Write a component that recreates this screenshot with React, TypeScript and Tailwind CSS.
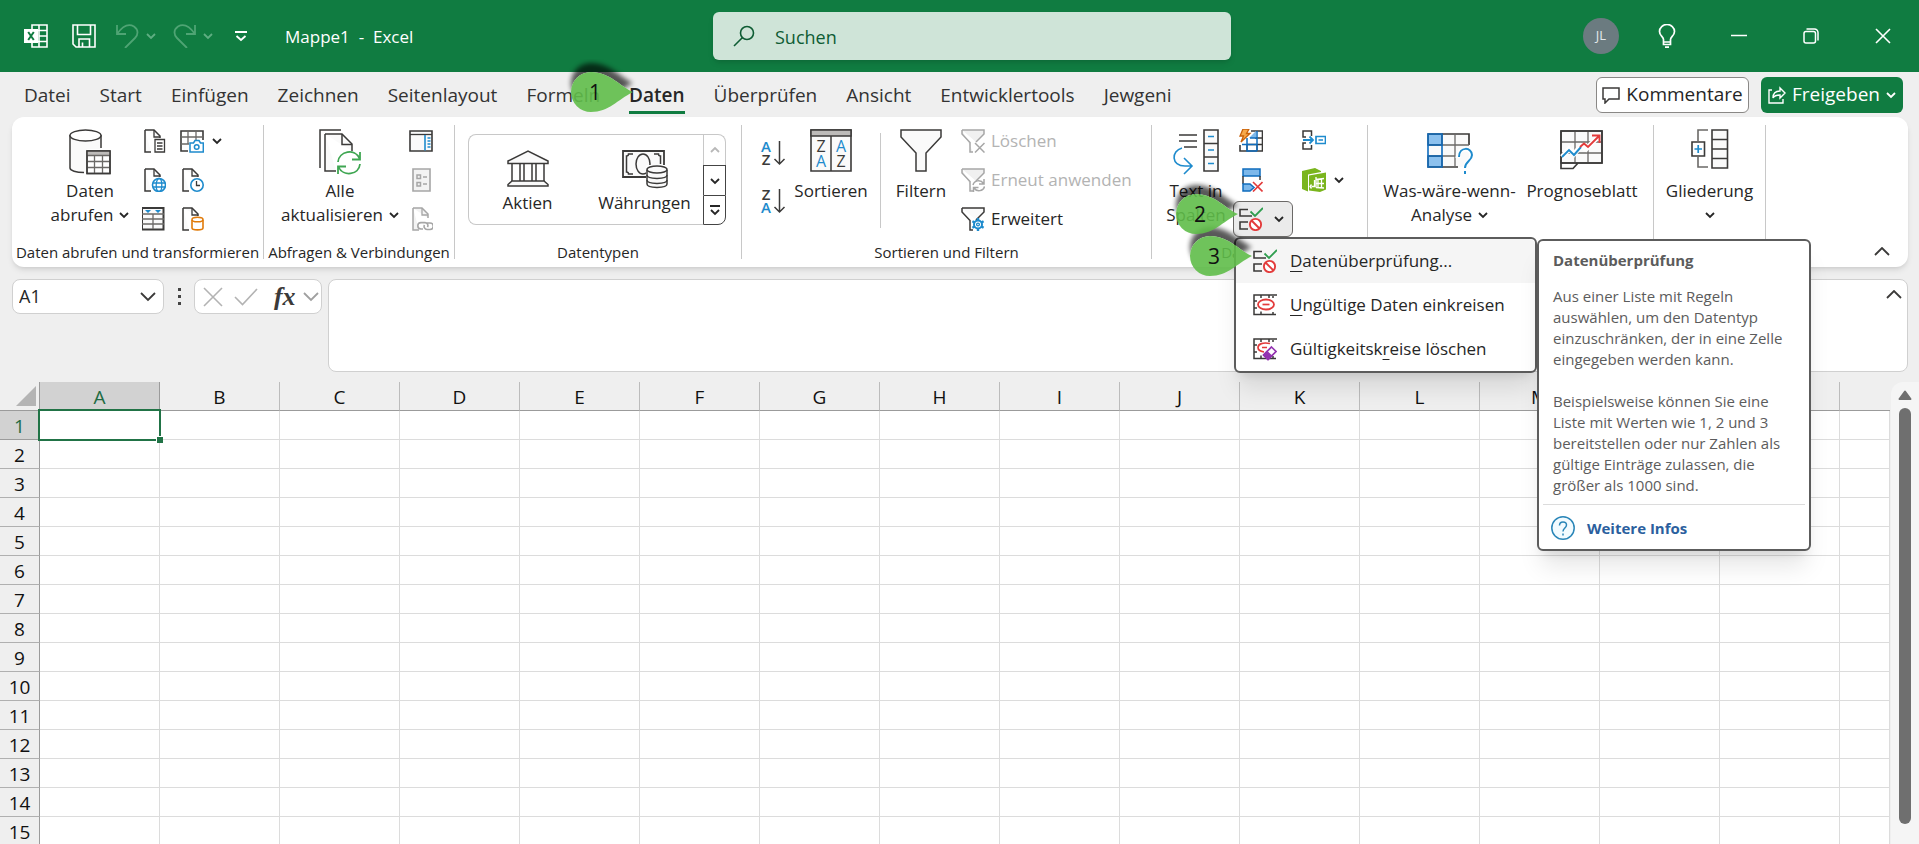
import { useState, type ReactNode } from "react";

const DARK = "#3b3a39";
const BLUE = "#1e8bcd";
const GREY = "#a6a6a6";

const TABS = [
  "Datei",
  "Start",
  "Einfügen",
  "Zeichnen",
  "Seitenlayout",
  "Formeln",
  "Daten",
  "Überprüfen",
  "Ansicht",
  "Entwicklertools",
  "Jewgeni",
];

const COLUMNS = "ABCDEFGHIJKLMNO".split("");
const ROWS = Array.from({ length: 15 }, (_, i) => i + 1);

type SvgProps = {
  w?: number;
  h?: number;
  stroke?: string;
  sw?: number;
  children: ReactNode;
};

function Svg({ w = 24, h = 24, stroke = DARK, sw = 1.3, children }: SvgProps) {
  return (
    <svg
      width={w}
      height={h}
      viewBox={`0 0 ${w} ${h}`}
      fill="none"
      stroke={stroke}
      strokeWidth={sw}
      className="shrink-0"
      aria-hidden="true"
    >
      {children}
    </svg>
  );
}

function Chevron({ color = "#262626", up = false }: { color?: string; up?: boolean }) {
  return (
    <Svg w={10} h={8} stroke={color} sw={1.8}>
      <path d={up ? "M1 6l4-4 4 4" : "M1 2l4 4 4-4"} />
    </Svg>
  );
}

function WideChevron({ color = "#3b3a39", up = false }: { color?: string; up?: boolean }) {
  return (
    <Svg w={16} h={10} stroke={color} sw={1.8}>
      <path d={up ? "M1 8l7-7 7 7" : "M1 1l7 7 7-7"} />
    </Svg>
  );
}

/* ---------- small ribbon icons ---------- */

function Page({ stroke = DARK }: { stroke?: string }) {
  return (
    <>
      <path d="M3 1h9l6 6v2M3 1v22h6" fill="#fafafa" stroke={stroke} strokeWidth="1.500" />
      <path d="M12 1v7h6" stroke={stroke} />
    </>
  );
}

function TextFileIcon() {
  return (
    <Svg>
      <Page />
      <path d="M13 10.500h9.500v12.500h-9.500z" fill="#fff" />
      <path d="M15 14h5.500M15 17h5.500M15 20h5.500" />
    </Svg>
  );
}

function WebFileIcon() {
  return (
    <Svg>
      <Page />
      <circle cx="17" cy="17" r="6.500" fill="#fff" stroke={BLUE} strokeWidth="1.600" />
      <ellipse cx="17" cy="17" rx="2.800" ry="6.500" stroke={BLUE} />
      <path d="M11 15h12M11 19h12" stroke={BLUE} />
    </Svg>
  );
}

function RangeIcon() {
  return (
    <Svg>
      <path d="M0 1h21.500v21.500H0z" fill="#fafafa" strokeWidth="2" />
      <path d="M0 7h22M0 12h22M0 17h22M11 7v15" stroke="#6b6967" />
      <path d="M3 3h6l-3 3zM13 3h6l-3 3z" fill={BLUE} stroke="none" />
    </Svg>
  );
}

function PictureTableIcon() {
  return (
    <Svg>
      <path d="M23 11V2H1v20h7" strokeWidth="1.600" />
      <path d="M1 8h22M1 15h8M8 2v13M16 2v9" stroke="#6b6967" />
      <path d="M10 14h3.500l1.500-2.500h4l1.500 2.500H23.300v9H10z" fill="#fff" stroke={BLUE} strokeWidth="1.500" />
      <circle cx="16.700" cy="18" r="2.300" stroke={BLUE} strokeWidth="1.500" />
    </Svg>
  );
}

function RecentIcon() {
  return (
    <Svg>
      <Page />
      <circle cx="17" cy="17" r="6.200" fill="#fff" stroke={BLUE} strokeWidth="1.600" />
      <path d="M16.500 13v4.500H20" />
    </Svg>
  );
}

function ConnectionIcon() {
  return (
    <Svg>
      <Page />
      <path d="M12 13v8c0 2.500 11 2.500 11 0v-8" fill="#fff" stroke="#e07b0a" strokeWidth="1.600" />
      <ellipse cx="17.500" cy="12.500" rx="5.500" ry="2.300" fill="#fff" stroke="#e07b0a" strokeWidth="1.600" />
    </Svg>
  );
}

function PaneIcon() {
  return (
    <Svg>
      <path d="M1 2h22v20H1z" fill="#fafafa" strokeWidth="1.600" />
      <path d="M1 5.500h22" />
      <path d="M16 6v15.500" stroke={BLUE} strokeWidth="1.600" />
      <path d="M18.500 9h3M18.500 12h3M18.500 15h3M18.500 18h3" stroke={BLUE} />
    </Svg>
  );
}

function PropertiesIcon() {
  return (
    <Svg stroke={GREY}>
      <path d="M4 1h17v22H4z" fill="#f3f3f3" strokeWidth="1.600" />
      <path d="M8 7h3.500v3.500H8zM8 14.500h3.500V18H8zM14 9h4M14 16h4" strokeWidth="1.500" />
    </Svg>
  );
}

function LinksIcon() {
  return (
    <Svg stroke={GREY}>
      <path d="M4 1h9l6 6v4M4 1v22h6" fill="#f3f3f3" strokeWidth="1.500" />
      <path d="M13 1v7h6" />
      <path
        d="M14 22h-2a3.200 3.200 0 010-6.400h4a3 3 0 012.500 4.500M18 16h3a3.200 3.200 0 010 6.500h-3a3 3 0 01-2.500-4.500"
        strokeWidth="1.600"
      />
    </Svg>
  );
}

function SortLetters({ desc = false }: { desc?: boolean }) {
  return (
    <svg width="26" height="30" viewBox="0 0 26 30" className="overflow-visible" aria-hidden="true">
      <g fontFamily="'Open Sans', sans-serif" fontSize="15" fontWeight="600" textAnchor="middle">
        <text x="6" y="12" fill={desc ? DARK : BLUE}>
          {desc ? "Z" : "A"}
        </text>
        <text x="6" y="25" fill={desc ? BLUE : DARK}>
          {desc ? "A" : "Z"}
        </text>
      </g>
      <path d="M19.500 1v23M14.500 19l5 5 5-5" fill="none" stroke={DARK} strokeWidth="1.500" />
    </svg>
  );
}

function SmallFunnel({ kind }: { kind: "clear" | "reapply" | "advanced" }) {
  const c = kind === "advanced" ? DARK : GREY;
  return (
    <Svg stroke={c}>
      <path d="M1 1h22v4l-8 8M1 1v4l8 8.500V23h3" fill={kind === "advanced" ? "#fafafa" : "#f0f0f0"} strokeWidth="1.500" />
      {kind === "clear" && <path d="M14 14l9.500 9.500M23.500 14L14 23.500" strokeWidth="1.500" />}
      {kind === "reapply" && (
        <path
          d="M12 17c1-4.500 7.500-6 10.500-1.500M23 11v5h-5M23.500 18.500c-1 4.500-7.500 6-10.500 1.500M12.500 24v-4.500h5"
          strokeWidth="1.500"
        />
      )}
      {kind === "advanced" && (
        <>
          <circle cx="17" cy="17.500" r="4" fill="#fff" stroke={BLUE} strokeWidth="2" />
          <circle cx="17" cy="17.500" r="1.400" stroke={BLUE} />
          <path
            d="M17 11v3M17 21v3M11.400 14.200l2.600 1.500M20 19.300l2.600 1.500M11.400 20.800l2.600-1.500M20 15.700l2.600-1.500"
            stroke={BLUE}
            strokeWidth="2.400"
          />
        </>
      )}
    </Svg>
  );
}

function FlashFillIcon() {
  return (
    <Svg>
      <path d="M12 2h11.500v20H1v-6" strokeWidth="1.600" />
      <path d="M8 15.500h15M16 9h7M8 15v7M18 15v7" />
      <path d="M17 2l-7 7h7z" fill="#7db8ea" stroke="none" />
      <path d="M18 2v20M8 9v13h10M3 15.500h15M11 9h7" stroke="#0f6cbd" strokeWidth="1.500" />
      <path d="M4 0h6L7.500 4.500H11L2 13l2.500-6H1z" fill="#f7a94b" stroke="#c8610a" />
    </Svg>
  );
}

function DuplicatesIcon() {
  return (
    <Svg>
      <path d="M4 1h17v7H4z" fill="#7db8ea" stroke="#0f6cbd" strokeWidth="1.500" />
      <path d="M4 8v8M21 8v4" strokeWidth="1.500" />
      <path d="M4 16h7l4 3.500L11 23H4z" fill="#7db8ea" stroke="#0f6cbd" strokeWidth="1.500" />
      <path d="M14 14l9.500 9.500M23.500 14L14 23.500" stroke="#e33b3b" strokeWidth="1.600" />
    </Svg>
  );
}

function ValidationIcon() {
  return (
    <Svg sw={1.6}>
      <path d="M9 2.500H1v6.500h12M9 15H1v7h8" />
      <path d="M11.500 4.500l4.500 4.500 8-8" stroke="#2f9e4f" strokeWidth="1.800" />
      <circle cx="16.500" cy="17.500" r="5.600" fill="#fff" stroke="#e33b3b" strokeWidth="1.900" />
      <path d="M12.500 13.500l8 8" stroke="#e33b3b" strokeWidth="1.900" />
    </Svg>
  );
}

function ConsolidateIcon() {
  return (
    <Svg sw={1.5}>
      <path d="M9.500 7V2H1v6h3M4 14H1v6h8.500v-4" />
      <path d="M1 11h10M7.500 7.500L11 11l-3.500 3.500" stroke={BLUE} strokeWidth="1.800" />
      <path d="M14 7.500h9.500v7H14zM16.500 11h4.500" stroke={BLUE} strokeWidth="1.700" />
    </Svg>
  );
}

function DataModelIcon() {
  return (
    <Svg stroke="none">
      <path d="M0 3l13-3 6 3v1L6 6.500v17L0 21z" fill="#7ab51d" />
      <path d="M7 7.500L24 4.500v17L18 24 7 22.500z" fill="#7ab51d" />
      <path
        d="M14 9v10.500M9.500 18.500h3V12M9.500 16.500l-1.500 2 1.500 2M16 12v7M19.500 11v9M14 11.500l8-1M14 15.500h8M14 19.500l8 .5"
        stroke="#fff"
        strokeWidth="1.300"
      />
    </Svg>
  );
}

function CircleInvalidIcon({ erase = false }: { erase?: boolean }) {
  return (
    <Svg>
      <path d="M24 2H1v19.500h22M8 2v3M16 2v3M1 8h3M1 15h3M8 21.500v-3M20 21v-2M20 3v2" strokeWidth="1.500" />
      {erase ? (
        <>
          <path d="M17 6.500C10 5 5 7 5 10.500S8 14.500 11 15M9 10.500h5" stroke="#e33b3b" strokeWidth="1.700" />
          <path d="M18.500 10l4.500 4.500-8 8-4.500-4.500z" fill="#fff" stroke="#9333b0" strokeWidth="1.600" />
          <path d="M14 14.500l4.500 4.500-3.500 3.500-4.500-4.500z" fill="#9333b0" stroke="#9333b0" />
        </>
      ) : (
        <>
          <ellipse cx="13" cy="11.500" rx="8" ry="5" stroke="#e33b3b" strokeWidth="1.800" />
          <path d="M9.500 11.500h7" stroke="#e33b3b" strokeWidth="1.700" />
        </>
      )}
    </Svg>
  );
}

/* ---------- large ribbon icons ---------- */

function DatabaseIcon() {
  return (
    <Svg w={42} h={46}>
      <path d="M1 6v33c0 3 7 5 14 5l3-1V20h14V6" fill="#fafafa" stroke="none" />
      <path d="M1 6v33c0 2.500 6 4.500 14 4.500M32 6v13" strokeWidth="1.500" />
      <ellipse cx="16.500" cy="6.500" rx="15.500" ry="5.500" fill="#fff" strokeWidth="1.500" />
      <path d="M18 22h23v22.500H18z" fill="#fff" />
      <path d="M18 22h23v4.500H18z" fill="#bdbbb9" stroke="none" />
      <path d="M18 26.500h23M18 32.500h23M18 38.500h23M25.500 26.500v18M33.500 26.500v18" stroke="#6b6967" />
      <path d="M18 22h23v22.500H18z" strokeWidth="1.500" />
    </Svg>
  );
}

function RefreshAllIcon() {
  return (
    <Svg w={42} h={46} sw={1.5}>
      <path d="M1 39V1h21" />
      <path d="M6 5h17l10 10v7M6 5v37h11" fill="#fafafa" />
      <path d="M23 5v10.500h10" />
      <g stroke="#3fa652" strokeWidth="1.800">
        <circle cx="30" cy="34" r="12" fill="#fff" stroke="none" />
        <path d="M19 33c1-11 17-14 21.500-3.500M41 23v7.500h-8" />
        <path d="M41 35c-1 11-17 13-21.500 3M19 45v-7.500h8" />
      </g>
    </Svg>
  );
}

function BankIcon() {
  return (
    <Svg w={42} h={38} sw={1.5}>
      <path d="M1 11L21 1l20 10v2.500H1z" fill="#fafafa" />
      <path d="M5 13.500V31M13 13.500V31M17 13.500V31M25 13.500V31M29 13.500V31M37 13.500V31" />
      <path d="M5 31h32l4 3.500V36H1v-1.500z" fill="#fafafa" />
    </Svg>
  );
}

function CurrencyIcon() {
  return (
    <Svg w={46} h={40} sw={1.5}>
      <path d="M1 2h41v26H1z" fill="#fafafa" strokeWidth="1.800" />
      <path d="M11 5H6.500a2 2 0 01-2 2v16a2 2 0 012 2H11M32 5h4.500a2 2 0 002 2v8" />
      <ellipse cx="21" cy="15" rx="7" ry="10" />
      <path d="M24 16h22v24H24z" fill="#fff" stroke="none" />
      <path d="M25 21v14c0 4.500 20 4.500 20 0V21" fill="#fafafa" />
      <path d="M25 26c0 4.500 20 4.500 20 0M25 31c0 4.500 20 4.500 20 0" />
      <ellipse cx="35" cy="20.500" rx="10" ry="3.500" fill="#fafafa" />
    </Svg>
  );
}

function SortIcon() {
  return (
    <svg width="44" height="44" viewBox="0 0 44 44" fill="none" aria-hidden="true">
      <path d="M2 1h40v41H2z" fill="#fafafa" stroke={DARK} strokeWidth="1.600" />
      <path d="M2 1h40v6H2z" fill="#bdbbb9" stroke={DARK} strokeWidth="1.500" />
      <path d="M22 7v35" stroke={DARK} strokeWidth="1.500" />
      <g fontFamily="'Open Sans', sans-serif" fontSize="16" textAnchor="middle">
        <text x="12" y="23" fill={DARK}>Z</text>
        <text x="12" y="38" fill={BLUE}>A</text>
        <text x="32" y="23" fill={BLUE}>A</text>
        <text x="32" y="38" fill={DARK}>Z</text>
      </g>
    </svg>
  );
}

function FunnelIcon() {
  return (
    <Svg w={42} h={44} sw={1.5}>
      <path d="M1 1h40v7L26 24v18H16V24L1 8z" fill="#fafafa" />
    </Svg>
  );
}

function TextColumnsIcon() {
  return (
    <Svg w={46} h={46} sw={1.6}>
      <path d="M6 6h18M6 12h18M11 18h13" />
      <path d="M31 1h14v41H31zM31 14.500h14M31 28h14" fill="#fafafa" />
      <path d="M35 7.500h6M35 21h6M35 34.500h6" stroke={BLUE} />
      <path d="M9 19C-2 22-2 37 12 37h7M11 29l8 8-8 8" stroke={BLUE} />
    </Svg>
  );
}

function WhatIfIcon() {
  return (
    <Svg w={46} h={46}>
      <path d="M1 5h41v33H1z" fill="#fafafa" stroke="none" />
      <path d="M42 16V5H15M15 38h16" strokeWidth="1.700" />
      <path d="M15 16h27M15 27h15M28 5v33" stroke="#6b6967" />
      <path d="M1 5h14v11H1zM1 27h14v11H1z" fill="#8cc1ee" />
      <path d="M1 5h14v33H1zM1 16h14M1 27h14" stroke="#0f6cbd" strokeWidth="1.600" />
      <path d="M31 29c0-12 14-11 14-2 0 6-7 6-7 13" stroke="#fff" strokeWidth="5" />
      <path d="M32 28c0-11 13-10 13-2 0 6-7 6-7 13M38 42v3" stroke={BLUE} strokeWidth="2" />
    </Svg>
  );
}

function ForecastIcon() {
  return (
    <Svg w={44} h={42}>
      <path d="M1 2h41v32H1z" fill="#fafafa" />
      <path d="M1 13h41M1 24h41M15 2v32M28 2v32" stroke="#6b6967" />
      <path d="M1 2h41v32H1zM1 34v5.500h12l5-5.500" strokeWidth="1.700" />
      <path d="M2 28l7-8 5 5 7-8 5 3 10-10" stroke="#fff" strokeWidth="5" />
      <path d="M2 28l7-7 5 5 7-8" stroke={BLUE} strokeWidth="1.900" />
      <path d="M20 18l4-3.500 4 3.500L39 7M32 6.500h7.500V14" stroke="#e33b3b" strokeWidth="1.900" />
    </Svg>
  );
}

function OutlineIcon() {
  return (
    <Svg w={38} h={42} sw={1.6}>
      <path d="M17 1H7v11M7 28v10h10" stroke="#6b6967" />
      <path d="M21 1h15.500v38H21zM21 10.500h15.500M21 20h15.500M21 29.500h15.500" fill="#fafafa" />
      <path d="M1 13h12.500v14H1z" fill="#fff" />
      <path d="M3.500 20h7.500M7.200 16v8" stroke={BLUE} strokeWidth="1.700" />
    </Svg>
  );
}

/* ---------- building blocks ---------- */

function Marker({ n }: { n: number }) {
  const drop = "M62 20C50 15 39 0 20 0a20 20 0 000 40c18 0 26-12 42-20z";
  return (
    <svg width="74" height="60" viewBox="-6 -16 74 60" aria-hidden="true">
      <defs>
        <filter id={`blur${n}`} x="-30%" y="-30%" width="160%" height="160%">
          <feGaussianBlur stdDeviation="2.500" />
        </filter>
        <mask id={`cut${n}`}>
          <rect x="-6" y="-16" width="74" height="60" fill="#fff" />
          <path d={drop} fill="#000" />
        </mask>
      </defs>
      <g mask={`url(#cut${n})`}>
        <path d={drop} transform="translate(0 -9)" opacity="0.650" filter={`url(#blur${n})`} />
      </g>
      <path d={drop} fill="#5fbd49" opacity="0.900" />
      <text x="24" y="28" textAnchor="middle" fontSize="21" fontFamily="'Open Sans', sans-serif" fill="#111">
        {n}
      </text>
    </svg>
  );
}

type BigButtonProps = {
  icon: ReactNode;
  top: string;
  bottom?: string;
  chevron?: boolean;
  className: string;
};

function BigButton({ icon, top, bottom, chevron, className }: BigButtonProps) {
  return (
    <button type="button" className={`flex flex-col items-center whitespace-nowrap pt-3 text-[17px] leading-6 ${className}`}>
      <span className="mb-1 flex h-[46px] items-start justify-center">{icon}</span>
      <span>{top}</span>
      <span className="flex h-6 items-center gap-[6px]">
        {bottom}
        {chevron && <Chevron />}
      </span>
    </button>
  );
}

function IconButton({ label, children }: { label: string; children: ReactNode }) {
  return (
    <button type="button" aria-label={label} className="flex h-6 items-center gap-2">
      {children}
    </button>
  );
}

function Group({ label, width, children }: { label?: string; width: string; children: ReactNode }) {
  return (
    <>
      <section className={`flex shrink-0 flex-col ${width}`} aria-label={label}>
        <div className="flex flex-1">{children}</div>
        {label && <p className="whitespace-nowrap pb-[5px] text-center text-[15px] leading-5">{label}</p>}
      </section>
      <div className="my-2 w-px shrink-0 bg-[#c8c8c8]" />
    </>
  );
}

function TitleBar() {
  return (
    <header className="grid h-[72px] grid-cols-[713fr_518fr_688fr] items-center bg-[#107c41] text-white">
      <div className="flex items-center pl-6">
        <Svg stroke="#fff" sw={1.6}>
          <path d="M8 5V1h15v22H8v-4M15 1v22M8 6.500h15M15 12h8M8 17.500h15" />
          <path d="M0 5h14v14H0z" fill="#fff" stroke="none" />
          <path d="M4.200 8l5.600 8M9.800 8l-5.600 8" stroke="#107c41" strokeWidth="2" />
        </Svg>
        <button type="button" aria-label="Speichern" className="ml-6">
          <Svg stroke="#fff" sw={1.6}>
            <path d="M1 1h22v22H4l-3-3zM5.500 1v9.500h13V1M7 23v-8h10.500v8M10.500 18.500V23" />
          </Svg>
        </button>
        <button type="button" aria-label="Rückgängig" className="ml-5 flex items-center gap-[6px]">
          <Svg stroke="#4fa474" sw={1.8}>
            <path d="M1 1v9h9M1 10C6 3 12-1 18 2.500c5 3.500 4 8.500 1 11.500L9 24" />
          </Svg>
          <Chevron color="#5fae82" />
        </button>
        <button type="button" aria-label="Wiederholen" className="ml-[17px] flex items-center gap-[6px]">
          <Svg stroke="#4fa474" sw={1.8}>
            <path d="M22 1v9h-9M22 10C17 3 11-1 5 2.500 0 6 1 11 4 14l10 10" />
          </Svg>
          <Chevron color="#5fae82" />
        </button>
        <button type="button" aria-label="Symbolleiste anpassen" className="ml-[21px]">
          <Svg w={14} h={12} stroke="#fff" sw={1.8}>
            <path d="M1 2h12M2.500 6L7 10l4.500-4" />
          </Svg>
        </button>
        <h1 className="ml-[37px] whitespace-pre pt-0.5 text-[17px] leading-6">Mappe1  -  Excel</h1>
      </div>
      <label className="flex h-12 items-center gap-5 rounded-md bg-[#cfe4d8] pl-5 text-[#0e5c34] shadow-md">
        <Svg w={22} h={22} stroke="#0e5c34" sw={1.6}>
          <circle cx="14" cy="8" r="6.500" />
          <path d="M9.500 12.500L1 21" />
        </Svg>
        <input
          aria-label="Suchen"
          placeholder="Suchen"
          className="w-full bg-transparent pt-0.5 text-[18px] outline-none placeholder:text-[#0e5c34]"
        />
      </label>
      <div className="flex items-center justify-end">
        <button type="button" className="mr-3 h-9 w-9 rounded-full bg-[#6b7b80] text-[13px] text-[#e3e8ea]">
          JL
        </button>
        <button type="button" aria-label="Ideen" className="flex h-10 w-[72px] items-center justify-center">
          <Svg stroke="#fff" sw={1.7}>
            <path d="M8.500 18v-2.500C8.500 12.500 4.500 12 4.500 7.500a7.500 7 0 0115 0c0 4.500-4 5-4 8V18zM8.500 18v2.500h7V18M10 23.200h4" />
          </Svg>
        </button>
        <button type="button" aria-label="Minimieren" className="flex h-10 w-[72px] items-center justify-center">
          <Svg w={16} h={16} stroke="#fff" sw={1.5}>
            <path d="M0 7.500h16" />
          </Svg>
        </button>
        <button type="button" aria-label="Wiederherstellen" className="flex h-10 w-[72px] items-center justify-center">
          <Svg w={16} h={16} stroke="#fff" sw={1.5}>
            <rect x="1" y="3.500" width="11.500" height="11.500" rx="2" />
            <path d="M3.500 1h8a3.500 3.500 0 013.500 3.500v8" />
          </Svg>
        </button>
        <button type="button" aria-label="Schließen" className="flex h-10 w-[72px] items-center justify-center">
          <Svg w={16} h={16} stroke="#fff" sw={1.6}>
            <path d="M1 1l14 14M15 1L1 15" />
          </Svg>
        </button>
      </div>
    </header>
  );
}

function TabBar() {
  const [active, setActive] = useState("Daten");

  return (
    <div className="flex h-[45px] items-center justify-between pr-4">
      <nav className="flex gap-[29px] pl-6 pt-0.5 text-[19px] leading-[34px]">
        {TABS.map((tab) => (
          <div key={tab} className="relative">
            <button
              type="button"
              onClick={() => setActive(tab)}
              className={tab === active ? "border-b-3 border-[#107c41] font-semibold leading-[31px]" : "text-[#333]"}
            >
              {tab}
            </button>
            {tab === "Daten" && (
              <div className="pointer-events-none absolute -left-16 -top-[22px] z-30">
                <Marker n={1} />
              </div>
            )}
          </div>
        ))}
      </nav>
      <div className="flex gap-3 text-[19px]">
        <button type="button" className="flex h-9 w-[153px] items-center justify-center gap-[6px] rounded-md border border-[#8a8886] bg-white text-[#262626]">
          <Svg w={18} h={18} sw={1.5}>
            <path d="M1 2h16v11H7l-4 4v-4H1z" />
          </Svg>
          Kommentare
        </button>
        <button type="button" className="flex h-9 w-[142px] items-center justify-center gap-[6px] rounded-md bg-[#107c41] text-white">
          <Svg w={18} h={18} stroke="#fff" sw={1.4}>
            <path d="M4 4H1v13h14v-4M5 12c0-5 3-7 7-7V2l5 5-5 5V9c-4 0-6 1-7 3z" />
          </Svg>
          Freigeben
          <Chevron color="#fff" />
        </button>
      </div>
    </div>
  );
}

function ValidationMenu() {
  return (
    <div className="absolute left-px top-full z-20 w-[303px] rounded-md border-2 border-[#5c5c5c] bg-white text-[17px] shadow-xl">
      <ul>
        <li>
          <button type="button" className="flex h-11 w-full items-center gap-[13px] rounded-t-md bg-[#f5f5f5] pl-[17px]">
            <ValidationIcon />
            <span>
              <u className="underline-offset-4">D</u>atenüberprüfung...
            </span>
          </button>
        </li>
        <li>
          <button type="button" className="flex h-11 w-full items-center gap-[13px] pl-[17px]">
            <CircleInvalidIcon />
            <span>
              <u className="underline-offset-4">U</u>ngültige Daten einkreisen
            </span>
          </button>
        </li>
        <li>
          <button type="button" className="flex h-11 w-full items-center gap-[13px] pl-[17px]">
            <CircleInvalidIcon erase />
            <span>
              Gültigkeitsk<u className="underline-offset-4">r</u>eise löschen
            </span>
          </button>
        </li>
      </ul>
      <div className="pointer-events-none absolute -left-[52px] -top-[19px]">
        <Marker n={3} />
      </div>
      <ValidationTip />
    </div>
  );
}

function ValidationTip() {
  return (
    <div
      role="tooltip"
      className="absolute left-full top-0 ml-0.5 w-[274px] rounded-md border-2 border-[#5c5c5c] bg-white text-[15px] leading-[21px] text-[#5c5c5c] shadow-xl"
    >
      <div className="whitespace-nowrap px-[14px] pb-2 pt-[9px]">
        <h2 className="mb-[15px] font-bold">Datenüberprüfung</h2>
        <p className="mb-[21px]">
          Aus einer Liste mit Regeln
          <br />
          auswählen, um den Datentyp
          <br />
          einzuschränken, der in eine Zelle
          <br />
          eingegeben werden kann.
        </p>
        <p>
          Beispielsweise können Sie eine
          <br />
          Liste mit Werten wie 1, 2 und 3
          <br />
          bereitstellen oder nur Zahlen als
          <br />
          gültige Einträge zulassen, die
          <br />
          größer als 1000 sind.
        </p>
      </div>
      <div className="mx-1 border-t border-[#dcdcdc]">
        <a href="#hilfe" className="flex h-11 items-center gap-3 pl-2 pt-0.5 font-bold text-[#2b5f9e]">
          <Svg stroke="#2a86b8" sw={1.5}>
            <circle cx="12" cy="12" r="11.200" fill="#f2fbff" />
            <path d="M8.500 9.500c0-5 7-4.500 7-.5 0 3-3.500 3-3.500 6.500M12 17.500v2" />
          </Svg>
          Weitere Infos
        </a>
      </div>
    </div>
  );
}

function Ribbon() {
  return (
    <div className="relative z-10 ml-3 mr-[11px] flex h-[150px] rounded-xl bg-white shadow-md">
      <Group label="Daten abrufen und transformieren" width="w-[251px]">
        <BigButton icon={<DatabaseIcon />} top="Daten" bottom="abrufen" chevron className="ml-[26px] w-[104px]" />
        <div className="flex flex-col gap-[15px] pt-3">
          <IconButton label="Aus Text/CSV"><TextFileIcon /></IconButton>
          <IconButton label="Aus dem Web"><WebFileIcon /></IconButton>
          <IconButton label="Aus Tabelle/Bereich"><RangeIcon /></IconButton>
        </div>
        <div className="ml-[14px] flex flex-col gap-[15px] pt-3">
          <IconButton label="Aus Bild"><PictureTableIcon /><Chevron /></IconButton>
          <IconButton label="Zuletzt verwendete Quellen"><RecentIcon /></IconButton>
          <IconButton label="Vorhandene Verbindungen"><ConnectionIcon /></IconButton>
        </div>
      </Group>

      <Group label="Abfragen & Verbindungen" width="w-[190px]">
        <BigButton icon={<RefreshAllIcon />} top="Alle" bottom="aktualisieren" chevron className="ml-[7px] w-[138px]" />
        <div className="flex flex-col gap-[15px] pt-3">
          <IconButton label="Abfragen und Verbindungen"><PaneIcon /></IconButton>
          <IconButton label="Eigenschaften"><PropertiesIcon /></IconButton>
          <IconButton label="Verknüpfungen bearbeiten"><LinksIcon /></IconButton>
        </div>
      </Group>

      <Group label="Datentypen" width="w-[286px]">
        <div className="ml-[13px] mt-[17px] flex h-[91px] w-[258px] text-[17px] leading-6">
          <div className="flex flex-1 rounded-l-lg border border-r-0 border-[#c8c8c8] pt-3">
            <button type="button" className="flex w-[117px] flex-col items-center">
              <span className="flex h-[44px] items-center"><BankIcon /></span>
              Aktien
            </button>
            <button type="button" className="flex w-[117px] flex-col items-center">
              <span className="flex h-[44px] items-center"><CurrencyIcon /></span>
              Währungen
            </button>
          </div>
          <div className="flex w-6 flex-col">
            <button type="button" aria-label="Nach oben" className="flex h-[31px] items-center justify-center rounded-tr-lg border border-b-0 border-[#c8c8c8]">
              <Chevron up color="#b8b8b8" />
            </button>
            <button type="button" aria-label="Nach unten" className="flex h-[30px] items-center justify-center border border-b-0 border-[#444]">
              <Chevron />
            </button>
            <button type="button" aria-label="Weitere" className="flex h-[30px] items-center justify-center rounded-br-lg border border-[#444]">
              <Svg w={12} h={12} stroke="#262626" sw={1.8}>
                <path d="M1 2h10M2 6l4 4 4-4" />
              </Svg>
            </button>
          </div>
        </div>
      </Group>

      <Group label="Sortieren und Filtern" width="w-[409px]">
        <div className="flex flex-col gap-[18px] pl-[18px] pt-[23px]">
          <button type="button" aria-label="Von A bis Z sortieren"><SortLetters /></button>
          <button type="button" aria-label="Von Z bis A sortieren"><SortLetters desc /></button>
        </div>
        <BigButton icon={<SortIcon />} top="Sortieren" className="w-[90px]" />
        <div className="ml-1 mt-4 h-[95px] w-px bg-[#c8c8c8]" />
        <BigButton icon={<FunnelIcon />} top="Filtern" className="w-20" />
        <div className="flex flex-col gap-[15px] whitespace-nowrap pt-3 text-[17px] leading-6">
          <button type="button" disabled className="flex h-6 items-center gap-[6px] text-[#b3b3b3]">
            <SmallFunnel kind="clear" />
            Löschen
          </button>
          <button type="button" disabled className="flex h-6 items-center gap-[6px] text-[#b3b3b3]">
            <SmallFunnel kind="reapply" />
            Erneut anwenden
          </button>
          <button type="button" className="flex h-6 items-center gap-[6px]">
            <SmallFunnel kind="advanced" />
            Erweitert
          </button>
        </div>
      </Group>

      <Group label="Datentools" width="w-[215px]">
        <BigButton icon={<TextColumnsIcon />} top="Text in" bottom="Spalten" className="ml-[7px] w-[74px]" />
        <div className="flex flex-col pt-3">
          <div className="mb-[15px] pl-[6px]"><IconButton label="Blitzvorschau"><FlashFillIcon /></IconButton></div>
          <div className="mb-[9px] pl-[6px]"><IconButton label="Duplikate entfernen"><DuplicatesIcon /></IconButton></div>
          <div className="relative">
            <button
              type="button"
              aria-label="Datenüberprüfung"
              aria-expanded="true"
              className="flex h-9 w-[60px] items-center gap-[11px] rounded-md border border-[#6b6967] bg-[#ebebeb] pl-[5px]"
            >
              <ValidationIcon />
              <Chevron />
            </button>
            <div className="pointer-events-none absolute -left-[63px] -top-[23px] z-30">
              <Marker n={2} />
            </div>
            <ValidationMenu />
          </div>
        </div>
        <div className="ml-[9px] flex flex-col gap-[15px] pt-3">
          <IconButton label="Konsolidieren"><ConsolidateIcon /></IconButton>
          <IconButton label="Datenmodell"><DataModelIcon /><Chevron /></IconButton>
        </div>
      </Group>

      <Group label="Prognose" width="w-[285px]">
        <BigButton icon={<WhatIfIcon />} top="Was-wäre-wenn-" bottom="Analyse" chevron className="ml-2 w-[147px]" />
        <BigButton icon={<ForecastIcon />} top="Prognoseblatt" className="w-[118px]" />
      </Group>

      <Group width="w-[111px]">
        <BigButton icon={<OutlineIcon />} top="Gliederung" chevron className="w-full" />
      </Group>

      <div className="flex flex-1 items-end justify-end pb-[10px] pr-[18px]">
        <button type="button" aria-label="Menüband reduzieren"><WideChevron up /></button>
      </div>
    </div>
  );
}

function FormulaBar() {
  return (
    <div className="flex items-start pb-[10px] pl-3 pr-[11px] pt-3">
      <div className="flex h-[35px] w-[152px] items-center rounded-lg border border-[#d0d0d0] bg-white pl-[6px] pr-[7px]">
        <input aria-label="Namenfeld" defaultValue="A1" className="w-full min-w-0 bg-transparent text-[18px] text-[#262626] outline-none" />
        <button type="button" aria-label="Namen anzeigen"><WideChevron /></button>
      </div>
      <div className="flex h-[35px] w-[30px] flex-col items-center justify-center gap-1">
        <span className="h-[3px] w-[3px] bg-[#444]" />
        <span className="h-[3px] w-[3px] bg-[#444]" />
        <span className="h-[3px] w-[3px] bg-[#444]" />
      </div>
      <div className="mr-[6px] flex h-[35px] w-[128px] items-center justify-between rounded-lg border border-[#d0d0d0] bg-white pl-2 pr-[2px]">
        <button type="button" aria-label="Abbrechen">
          <Svg w={20} h={20} stroke="#b3b3b3" sw={1.6}>
            <path d="M1 1l18 18M19 1L1 19" />
          </Svg>
        </button>
        <button type="button" aria-label="Eingeben" className="pl-1">
          <Svg w={24} h={20} stroke="#b3b3b3" sw={1.6}>
            <path d="M1 10l7.500 7.500L23 2" />
          </Svg>
        </button>
        <button
          type="button"
          aria-label="Funktion einfügen"
          className="pl-2 font-['Liberation_Serif',serif] text-[26px] font-bold italic leading-6 text-[#3b3a39]"
        >
          fx
        </button>
        <button type="button" aria-label="Zuletzt verwendete Funktionen"><WideChevron color="#a0a0a0" /></button>
      </div>
      <div className="flex h-[93px] flex-1 items-start rounded-lg border border-[#d0d0d0] bg-white pr-[5px]">
        <textarea aria-label="Bearbeitungsleiste" className="h-full flex-1 resize-none bg-transparent p-2 text-[18px] outline-none" />
        <button type="button" aria-label="Bearbeitungsleiste reduzieren" className="mt-[10px]">
          <WideChevron up />
        </button>
      </div>
    </div>
  );
}

function Sheet() {
  return (
    <div className="flex min-h-0 flex-1">
      <div className="min-w-0 flex-1 overflow-hidden">
        <table className="w-full table-fixed border-separate border-spacing-0 text-[19px] leading-[26px] text-[#111]">
          <colgroup>
            <col className="w-10" />
            {COLUMNS.map((c) => (
              <col key={c} className="w-[120px]" />
            ))}
            <col />
          </colgroup>
          <thead>
            <tr className="h-[29px]">
              <th aria-label="Alles auswählen" className="border-b border-r border-[#9b9b9b] p-0 pl-4">
                <Svg w={20} h={20} stroke="none">
                  <path d="M20 0v20H0z" fill="#b4b4b4" />
                </Svg>
              </th>
              {COLUMNS.map((c) => (
                <th
                  key={c}
                  className={
                    c === "A"
                      ? "border-b border-r border-[#9b9b9b] bg-[#d2d2d2] p-0 pt-0.5 font-normal text-[#1e6b43]"
                      : "border-b border-r border-b-[#9b9b9b] border-r-[#bcbcbc] p-0 pt-0.5 font-normal"
                  }
                >
                  {c}
                </th>
              ))}
              <th aria-label="P" className="border-b border-[#9b9b9b] p-0" />
            </tr>
          </thead>
          <tbody>
            {ROWS.map((r) => (
              <tr key={r} className="h-[29px]">
                <th
                  className={
                    r === 1
                      ? "border-b border-r border-[#9b9b9b] bg-[#d2d2d2] p-0 pt-0.5 font-normal text-[#1e6b43]"
                      : "border-b border-r border-b-[#b0b0b0] border-r-[#9b9b9b] bg-[#efefef] p-0 pt-0.5 font-normal"
                  }
                >
                  {r}
                </th>
                {COLUMNS.map((c) => (
                  <td key={c} className="relative border-b border-r border-[#dcdcdc] bg-white p-0">
                    {c === "A" && r === 1 && (
                      <div className="absolute -left-0.5 -right-0.5 -top-0.5 -bottom-0.5 z-[1] border-2 border-[#217346]">
                        <span className="absolute -bottom-1 -right-1 h-[7px] w-[7px] border-l border-t border-white bg-[#217346]" />
                      </div>
                    )}
                  </td>
                ))}
                <td className="border-b border-r border-[#dcdcdc] bg-white p-0" />
              </tr>
            ))}
          </tbody>
        </table>
      </div>
      <div className="ml-px flex w-7 flex-col items-center rounded-tl-xl bg-[#f5f5f5] pb-5 pt-2">
        <Svg w={14} h={10} stroke="#6f6f6f" sw={2}>
          <path d="M7 1.500l5.500 7.500h-11z" fill="#6f6f6f" strokeLinejoin="round" />
        </Svg>
        <div className="mt-2 w-3 flex-1 rounded-full bg-[#6f6f6f]" />
      </div>
    </div>
  );
}

export default function App() {
  return (
    <div className="flex h-screen flex-col overflow-hidden bg-[#efefef] font-['Open_Sans','Noto_Sans',sans-serif] text-[#262626]">
      <TitleBar />
      <TabBar />
      <Ribbon />
      <FormulaBar />
      <Sheet />
    </div>
  );
}
